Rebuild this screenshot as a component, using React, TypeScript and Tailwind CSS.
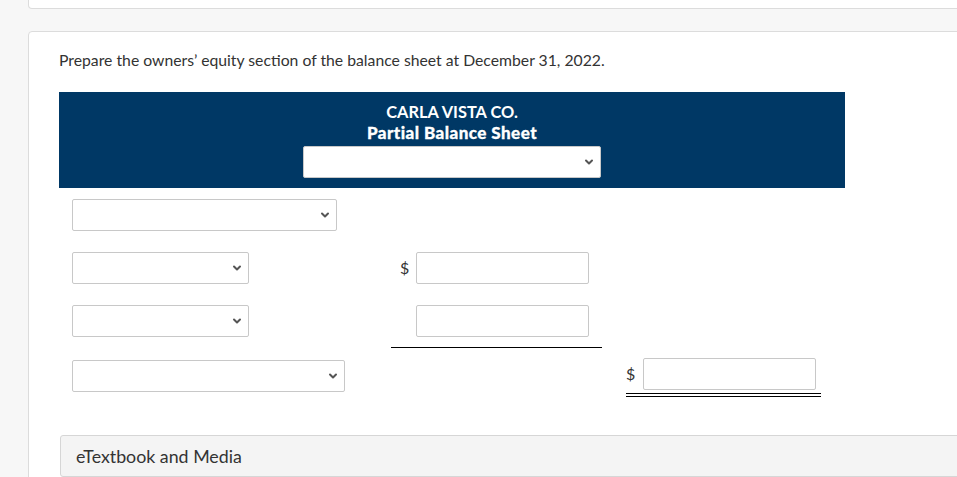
import { ChevronDown } from "lucide-react";

function Select({ width }: { width: string }) {
  return (
    <div className={`${width} h-[32px] bg-white border border-[#c8c8c8] rounded-[2px] flex items-center justify-end pr-[5px]`}>
      <ChevronDown className="w-[12px] h-[12px] text-[#555]" strokeWidth={4} />
    </div>
  );
}

function Field() {
  return <div className="w-[173px] h-[32px] bg-white border border-[#c8c8c8] rounded-[2px]" />;
}

export default function App() {
  return (
    <div className="w-[957px] h-[477px] overflow-hidden bg-[#f7f7f7] font-['Lato',sans-serif] text-[#333]">
      <div className="ml-[28px]">
        {/* previous card */}
        <div className="h-[9px] bg-white border border-t-0 border-[#dcdcdc] rounded-b-[4px] mr-[-4px]" />

        {/* question card */}
        <div className="mt-[22px] h-[460px] bg-white border border-[#dcdcdc] rounded-[4px] mr-[-4px] pl-[30px]">
          <p className="pt-[18px] text-[15.75px] leading-[20px] text-[#333]">
            Prepare the owners’ equity section of the balance sheet at December 31, 2022.
          </p>

          <div className="mt-[22px] w-[786px] h-[96px] bg-[#003865] flex flex-col items-center pt-[9px]">
            <div className="text-white font-bold text-[16.4px] leading-[21px]">CARLA VISTA CO.</div>
            <div className="text-white font-black text-[17px] tracking-[0.45px] leading-[21px] [-webkit-text-stroke:0.3px_white]">
              Partial Balance Sheet
            </div>
            <div className="mt-[3px]">
              <Select width="w-[298px]" />
            </div>
          </div>

          <div className="pl-[13px] pt-[11px]">
            <Select width="w-[265px]" />

            <div className="mt-[21px] flex items-center">
              <Select width="w-[177px]" />
              <span className="ml-[151px] w-[16px] text-[16px] text-[#333]">$</span>
              <Field />
            </div>

            <div className="mt-[21px] flex items-center">
              <Select width="w-[177px]" />
              <div className="ml-[167px]">
                <Field />
              </div>
            </div>
            <div className="ml-[319px] mt-[10px] w-[211px] h-[1px] bg-black" />

            <div className="mt-[12px] flex items-start">
              <Select width="w-[273px]" />
              <div className="ml-[281px] -mt-[2px] w-[195px]">
                <div className="flex items-center">
                  <span className="w-[17px] text-[16px] text-[#333]">$</span>
                  <Field />
                </div>
                <div className="mt-[3px] h-[4px] border-y border-black" />
              </div>
            </div>
          </div>

          <div className="mt-[38px] ml-[1px] h-[42px] bg-[#f4f4f4] border border-[#d6d6d6] rounded-[3px] flex items-center pl-[15px] text-[17.8px] text-[#333]">
            eTextbook and Media
          </div>
        </div>
      </div>
    </div>
  );
}
